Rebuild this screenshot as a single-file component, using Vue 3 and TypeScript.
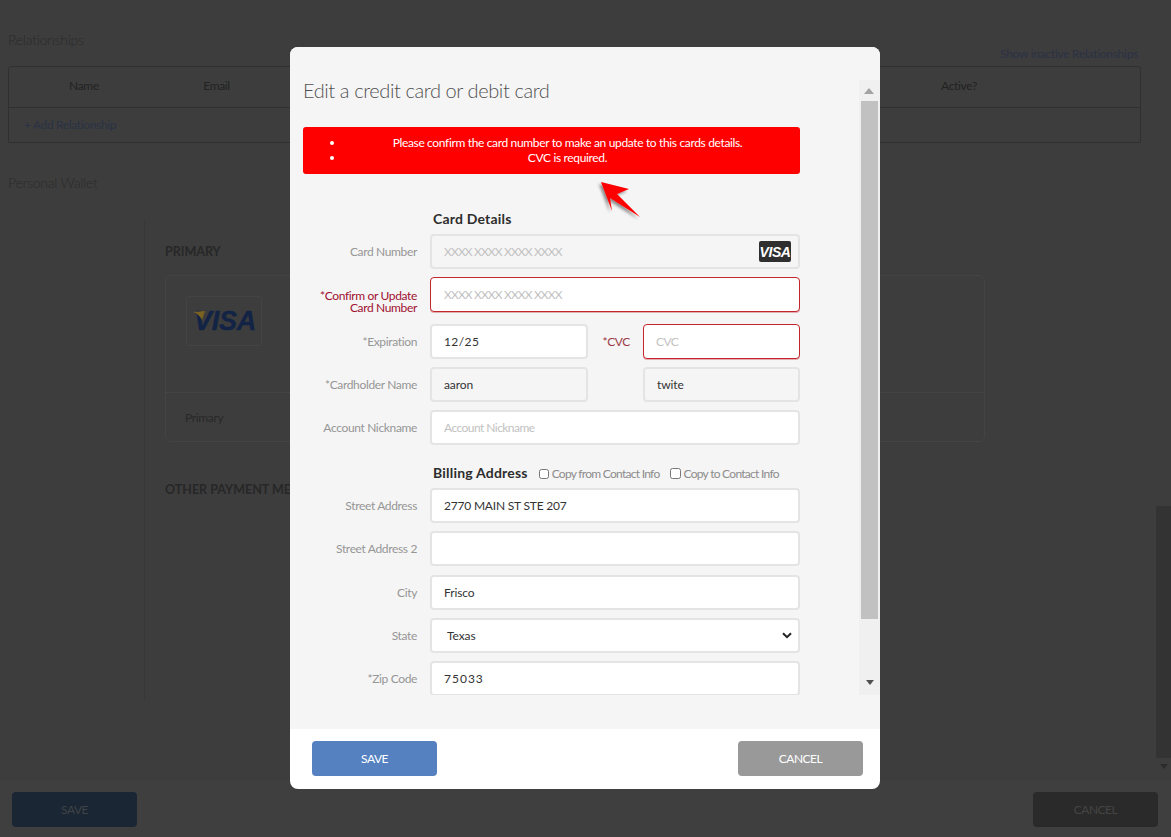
<script setup lang="ts">
interface Col { label: string; width: string }
const columns: Col[] = [
  { label: 'Name', width: '150px' },
  { label: 'Email', width: '115px' },
  { label: '', width: '1fr' },
  { label: 'Active?', width: '362px' },
]
const errors: string[] = [
  'Please confirm the card number to make an update to this cards details.',
  'CVC is required.',
]
const mask = 'XXXX XXXX XXXX XXXX'
</script>

<template>
  <div class="page">
    <div class="page-top">
      <main class="content">
        <div class="rel-head">
          <h2 class="section-title">Relationships</h2>
          <a class="show-link">Show inactive Relationships</a>
        </div>
        <div class="table">
          <div class="thead">
            <span v-for="c in columns" :key="c.label" :style="{ width: c.width === '1fr' ? undefined : c.width, flex: c.width === '1fr' ? 1 : undefined }">{{ c.label }}</span>
          </div>
          <div class="tbody"><a class="add-link">+ Add Relationship</a></div>
        </div>
        <h2 class="section-title wallet-title">Personal Wallet</h2>
        <section class="wallet">
          <h3 class="wallet-h">PRIMARY</h3>
          <div class="wallet-card">
            <div class="wallet-card-top">
              <div class="visa-box">
                <svg class="visa-wing" viewBox="0 0 12 10"><path d="M0 1 L12 0 L9 9 C7 5 4 2 0 1Z" fill="#7a6320" /></svg>
                <span class="visa-big">VISA</span>
              </div>
            </div>
            <div class="wallet-card-foot">Primary</div>
          </div>
          <h3 class="wallet-h other">OTHER PAYMENT METHODS</h3>
        </section>
      </main>
      <div class="page-scroll">
        <div class="page-thumb"></div>
        <div class="page-down"></div>
      </div>
    </div>
    <footer class="page-foot">
      <button class="btn bg-save">SAVE</button>
      <button class="btn bg-cancel">CANCEL</button>
    </footer>

    <div class="modal">
      <div class="modal-main">
        <div class="scroller">
          <div class="form">
            <h1 class="title">Edit a credit card or debit card</h1>
            <div class="alert">
              <ul>
                <li v-for="e in errors" :key="e">{{ e }}</li>
              </ul>
            </div>
            <svg class="arrow" viewBox="0 0 50 46" width="50" height="46">
              <defs>
                <filter id="arrow-shadow" x="-30%" y="-30%" width="160%" height="160%">
                  <feDropShadow dx="-2" dy="2" stdDeviation="1.4" flood-color="#000" flood-opacity="0.45" />
                </filter>
              </defs>
              <polygon points="5,2 33,9 21,14 44,37 14,18 16,31" fill="#ff0000" filter="url(#arrow-shadow)" />
            </svg>

            <h4 class="group card-group">Card Details</h4>
            <div class="row">
              <label class="lbl">Card Number</label>
              <div class="input-wrap wide">
                <input class="inp mask" disabled :placeholder="mask" />
                <span class="visa-small">VISA</span>
              </div>
            </div>
            <div class="row confirm-row">
              <label class="lbl err two">*Confirm or Update<br />Card Number</label>
              <input class="inp wide invalid mask" :placeholder="mask" />
            </div>
            <div class="row">
              <label class="lbl">*Expiration</label>
              <input class="inp num" value="12/25" />
              <label class="lbl err-soft">*CVC</label>
              <input class="inp invalid narrow-ph" placeholder="CVC" />
            </div>
            <div class="row">
              <label class="lbl">*Cardholder Name</label>
              <input class="inp" disabled value="aaron" />
              <span></span>
              <input class="inp" disabled value="twite" />
            </div>
            <div class="row">
              <label class="lbl">Account Nickname</label>
              <input class="inp wide narrow-ph" placeholder="Account Nickname" />
            </div>

            <div class="billing-head">
              <h4 class="group billing">Billing Address</h4>
              <label class="chk first"><input type="checkbox" />Copy from Contact Info</label>
              <label class="chk second"><input type="checkbox" />Copy to Contact Info</label>
            </div>
            <div class="row addr">
              <label class="lbl">Street Address</label>
              <input class="inp wide street" value="2770 MAIN ST STE 207" />
            </div>
            <div class="row addr">
              <label class="lbl">Street Address 2</label>
              <input class="inp wide" />
            </div>
            <div class="row addr">
              <label class="lbl">City</label>
              <input class="inp wide" value="Frisco" />
            </div>
            <div class="row addr">
              <label class="lbl">State</label>
              <div class="input-wrap wide">
                <select class="inp sel"><option>Texas</option></select>
                <svg class="chev" viewBox="0 0 10 7" width="10" height="7"><path d="M1 1.2 L5 5.2 L9 1.2" fill="none" stroke="#222" stroke-width="2" /></svg>
              </div>
            </div>
            <div class="row addr">
              <label class="lbl">*Zip Code</label>
              <input class="inp wide zip" value="75033" />
            </div>
          </div>
          <div class="bar">
            <div class="bar-up"></div>
            <div class="bar-thumb"></div>
            <div class="bar-down"></div>
          </div>
        </div>
      </div>
      <div class="modal-foot">
        <button class="btn save">SAVE</button>
        <button class="btn cancel">CANCEL</button>
      </div>
    </div>
  </div>
</template>

<style>
html, body { margin: 0; background: #3d3d3d; }
</style>

<style scoped>
.page {
  position: relative;
  width: 1171px;
  height: 837px;
  overflow: hidden;
  background: #3d3d3d;
  font-family: Lato, "Liberation Sans", sans-serif;
  font-size: 12px;
  letter-spacing: -0.35px;
  color: #262626;
  display: flex;
  flex-direction: column;
}
.page-top { height: 780px; display: flex; }
.content { flex: 1; padding: 0 15px 0 8px; min-width: 0; }
.rel-head { display: flex; justify-content: space-between; height: 66px; }
.section-title { margin: 0; font-weight: 300; font-size: 14px; line-height: 18px; color: #2a2a2a; letter-spacing: -0.25px; }
.rel-head .section-title { margin-top: 31px; }
.show-link { margin: 46px 3px 0 0; line-height: 16px; font-size: 12px; color: #2a3244; letter-spacing: -0.28px; }
.table { height: 77px; border: 1px solid #303030; border-radius: 3px 3px 0 0; box-sizing: border-box; }
.thead { display: flex; height: 41px; align-items: center; text-align: center; border-bottom: 1px solid #303030; color: #222; padding-bottom: 4px; box-sizing: border-box; }
.tbody { padding: 9px 15px; line-height: 15px; }
.add-link { color: #2a3244; }
.wallet-title { margin-top: 31px; }
.wallet { margin: 27px 0 0 136px; width: 841px; height: 481px; box-sizing: border-box; padding: 24px 0 0 20px; border-left: 1px solid #383838; }
.wallet-h { margin: 0; font-size: 12.5px; line-height: 17px; font-weight: 700; color: #272727; letter-spacing: 0; }
.wallet-card { margin-top: 15px; width: 820px; height: 167px; border: 1px solid #444; border-radius: 6px; box-sizing: border-box; }
.wallet-card-top { height: 117px; padding: 20px 0 0 20px; box-sizing: border-box; border-bottom: 1px solid #444; }
.visa-box { position: relative; width: 76px; height: 50px; border: 1px solid #444; border-radius: 3px; box-sizing: border-box; display: flex; align-items: center; justify-content: center; }
.visa-big { font: italic 700 27px "Liberation Sans", sans-serif; color: #122345; letter-spacing: -0.3px; -webkit-text-stroke: 0.4px #122345; padding-left: 2px; }
.visa-wing { position: absolute; left: 6px; top: 14px; width: 12px; height: 10px; }
.wallet-card-foot { padding: 17px 0 0 19px; line-height: 16px; color: #282828; }
.other { margin-top: 39px; }
.page-scroll { width: 15px; position: relative; }
.page-thumb { margin-top: 506px; height: 252px; background: #333; }
.page-down { width: 0; margin: 6px auto 0; border: 4px solid transparent; border-top: 5px solid #2c2c2c; border-bottom: 0; }
.page-foot { flex: 1; background: #3f3f3f; display: flex; justify-content: space-between; padding: 12px 13px 0 12px; box-sizing: border-box; }

.btn { width: 125px; height: 35px; border: 0; border-radius: 4px; font: 12px Lato, "Liberation Sans", sans-serif; letter-spacing: -0.5px; padding: 0; }
.bg-save { background: #1a2633; color: #3f4246; }
.bg-cancel { background: #2a2a2a; color: #444; }
.save { background: #5581c1; color: #fff; }
.cancel { background: #999; color: #fff; }

.modal { position: absolute; left: 290px; top: 47px; width: 590px; height: 742px; border-radius: 8px; overflow: hidden; background: #fff; display: flex; flex-direction: column; }
.modal-main { height: 682px; background: #f5f5f5; padding-top: 33px; box-sizing: border-box; }
.scroller { height: 615px; display: flex; justify-content: space-between; }
.form { position: relative; width: 497px; margin-left: 13px; height: 615px; overflow: hidden; flex: none; }
.title { margin: 0; font-size: 20px; line-height: 24px; padding-bottom: 3px; margin-top: -2px; font-weight: 300; color: #525252; letter-spacing: -0.4px; white-space: nowrap; }
.alert { margin-top: 22px; height: 47px; background: #f00; border-radius: 3px; color: #fff; text-align: center; line-height: 14.5px; padding-top: 9px; box-sizing: border-box; }
.alert ul { margin: 0; padding: 0 0 0 42px; }
.alert li { padding-right: 10px; }
.arrow { position: absolute; left: 293px; top: 100px; overflow: visible; }
.group { margin: 0; font-size: 14px; font-weight: 700; color: #2d2d2d; line-height: 18px; letter-spacing: 0.2px; white-space: nowrap; }
.card-group { margin: 36px 0 6px 130px; }
.row { display: grid; grid-template-columns: 115px 158px 31px 157px; grid-template-rows: 35px; column-gap: 12px; height: 35px; margin-bottom: 8px; align-items: center; }
.row.addr { margin-bottom: 8.25px; }
.row.confirm-row { margin-bottom: 12px; }
.lbl { text-align: right; color: #969696; line-height: 12px; white-space: nowrap; padding: 1px 1px 0 0; }
.lbl.err { color: #a01030; }
.lbl.two { align-self: start; padding-top: 13px; }
.lbl.err-soft { color: #9c3a48; }
.inp { box-sizing: border-box; width: 100%; height: 35px; padding: 0 12px; border: 2px solid #e4e4e4; border-radius: 4px; background: #fff; font: 12px Lato, "Liberation Sans", sans-serif; color: #333; outline: none; letter-spacing: -0.1px; }
.inp::placeholder { color: #c2c2c2; opacity: 1; }
.inp:disabled { background: #f5f5f5; color: #333; }
.mask::placeholder { letter-spacing: -0.85px; }
.narrow-ph::placeholder { letter-spacing: -0.55px; }
.num { letter-spacing: 0.4px; }
.street { letter-spacing: -0.2px; }
.zip { letter-spacing: 1px; }
.invalid { border: 1px solid #c4262e; box-shadow: 0 1px 0 rgba(196, 38, 46, 0.35); padding: 0 12px; }
.invalid.wide { padding: 0 13px; }
.wide { grid-column: 2 / 5; }
.sel { appearance: none; -webkit-appearance: none; padding: 0 0 0 15px; color: #333; }
.input-wrap { position: relative; height: 35px; }
.chev { position: absolute; right: 8px; top: 14px; }
.visa-small { position: absolute; right: 9px; top: 7px; width: 32px; height: 21px; background: #2f2f2f; color: #fff; border-radius: 2px; text-align: center; font: italic 700 14px/22px "Liberation Sans", sans-serif; letter-spacing: -0.4px; }
.billing-head { display: flex; align-items: center; height: 18px; margin: 19px 0 6px 130px; }
.chk { display: flex; align-items: center; color: #8c8c8c; font-size: 12px; white-space: nowrap; letter-spacing: -0.72px; padding-top: 1px; }
.chk input { margin: 0 3px 0 0; width: 10px; height: 10px; }
.chk.first { margin: 0 10px 0 11px; }
.chk.second input { width: 11px; height: 11px; }
.bar { width: 21px; height: 615px; background: #f0f0f0; display: flex; flex-direction: column; align-items: flex-end; flex: none; }
.bar-up { width: 0; margin: 8px 6px 0 0; border: 5px solid transparent; border-bottom: 6px solid #a3a3a3; border-top: 0; }
.bar-thumb { width: 17px; height: 518px; margin: 7px 2px 0 0; background: #c1c1c1; }
.bar-down { width: 0; margin: 61px 6px 0 0; border: 4px solid transparent; border-top: 5px solid #505050; border-bottom: 0; }
.modal-foot { flex: 1; display: flex; justify-content: space-between; padding: 12px 17px 0 22px; box-sizing: border-box; }
</style>
